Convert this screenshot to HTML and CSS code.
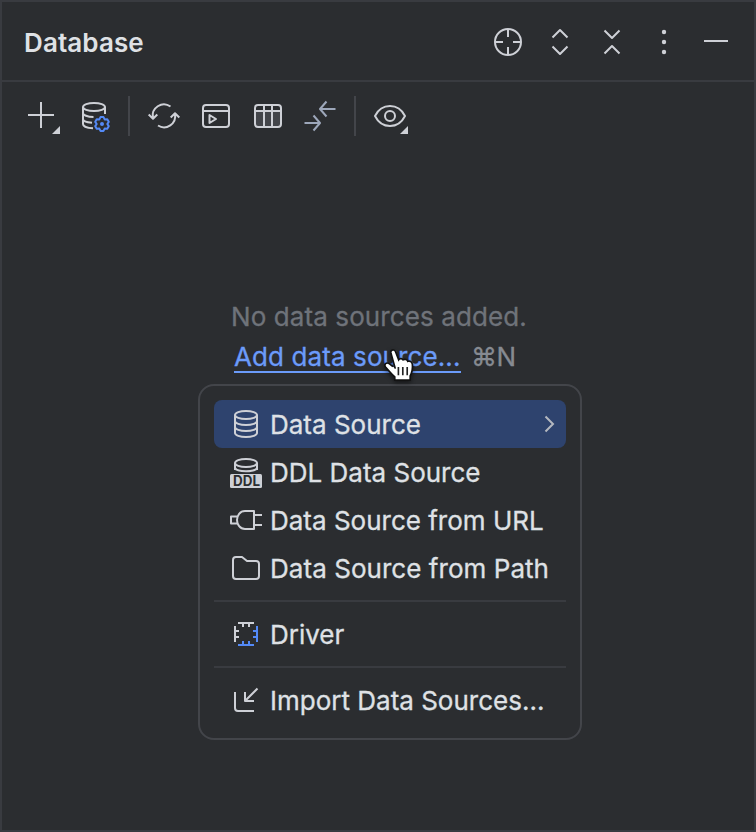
FILE: index.html
```html
<!DOCTYPE html>
<html lang="en">
<head>
<meta charset="utf-8">
<title>Database</title>
<link rel="stylesheet" href="styles.css">
</head>
<body>
<main class="panel">
  <header class="header">
    <h1 class="title">Database</h1>
    <div class="header-actions">
      <svg class="icon" viewBox="0 0 32 32"><circle cx="16" cy="16" r="13"/><path d="M16 3v8M16 21v8M3 16h8M21 16h8"/></svg>
      <svg class="icon" viewBox="0 0 32 32"><path d="M8.500 11.500L16 4l7.500 7.500M8.500 20.500L16 28l7.500-7.500"/></svg>
      <svg class="icon" viewBox="0 0 32 32"><path d="M8.500 4.500L16 12l7.500-7.500M8.500 27.500L16 20l7.500 7.500"/></svg>
      <svg class="icon" viewBox="0 0 32 32"><g class="solid"><circle cx="16" cy="6" r="2.200"/><circle cx="16" cy="16" r="2.200"/><circle cx="16" cy="26" r="2.200"/></g></svg>
      <svg class="icon" viewBox="0 0 32 32"><path d="M4 15h24"/></svg>
    </div>
  </header>

  <nav class="toolbar">
    <svg class="icon add" viewBox="0 0 32 32"><path d="M15 2v26M2 15h26"/><path class="solid" d="M34 26v8h-8z"/></svg>
    <svg class="icon" viewBox="0 0 32 32"><ellipse cx="14" cy="7" rx="11" ry="4"/><path d="M3 7v17c0 2.200 4 4 10 4.200M25 7v7M3 13c0 2 4.500 4 10.500 4M3 19c0 1.800 3.500 3.300 9 3.700"/><g class="accent" transform="translate(22 24)"><path d="M-1.500-6.900H1.500L2.650-4.600L5.260-4.760L6.760-2.160L5.300 0L6.760 2.160L5.260 4.760L2.650 4.600L1.500 6.900H-1.500L-2.650 4.600L-5.260 4.760L-6.760 2.160L-5.300 0L-6.760-2.160L-5.260-4.760L-2.650-4.600Z"/><circle class="gear-dot" r="2"/></g></svg>
    <span class="divider"></span>
    <svg class="icon" viewBox="0 0 32 32"><path d="M22.500 6.500A11.200 11.200 0 0 0 5 18M.700 14.500L5 18.800l4.300-4.300M10 25.500A11.200 11.200 0 0 0 27 14M22.700 17.500l4.300-4.300 4.300 4.300"/></svg>
    <svg class="icon" viewBox="0 0 32 32"><rect x="3" y="5" width="26" height="22" rx="3"/><path d="M3 11h26M9.500 15v8l6.500-4z"/></svg>
    <svg class="icon" viewBox="0 0 32 32"><rect class="tint" x="3" y="11" width="26" height="16"/><rect x="3" y="5" width="26" height="22" rx="3"/><path d="M3 11h26M12 5v22M20 5v22"/></svg>
    <svg class="icon muted" viewBox="0 0 32 32"><path d="M31.500 9H16.500M22.500 1.500L16 9l6.500 7.500M.500 23h15M9.500 15.500L16 23 9.500 30.500"/></svg>
    <span class="divider second"></span>
    <svg class="icon" viewBox="0 0 32 32"><path d="M1 16C4 10 9.500 6 16 6s12 4 15 10c-3 6-8.500 10-15 10S4 22 1 16z"/><circle cx="16" cy="16" r="5"/><path class="solid" d="M34 26v8h-8z"/></svg>
  </nav>

  <section class="empty">
    <p class="message">No data sources added.</p>
    <p class="action"><a class="link">Add data source...</a><span class="shortcut">⌘N</span>
      <svg class="cursor" viewBox="0 0 30 34" preserveAspectRatio="none"><path class="hand" d="M11.200 20L7.200 4.800C6.500 1.600 10.600.7 11.500 3.800L14.200 11.500C15 9.800 17.600 10 18.300 11.600C20 10.500 22 11.200 22.500 13C24.500 12.200 26.500 13.500 26.700 16C27.200 21 26 24.500 24.700 27V31H10.700V28C8 25.500 5 21.500 2.300 18.500C.6 16 2.800 13.500 5.600 15.200L9 18"/><path class="fingers" d="M14 18.500v8M18 18.500v8M22 18.500v8"/></svg>
    </p>
  </section>

  <div class="menu">
    <div class="item selected"><svg class="icon" viewBox="0 0 32 32"><ellipse cx="16" cy="7" rx="11" ry="4"/><path d="M5 7v18c0 2.200 5 4 11 4s11-1.800 11-4V7M5 13c0 2.200 5 4 11 4s11-1.800 11-4M5 19c0 2.200 5 4 11 4s11-1.800 11-4"/></svg><span>Data Source</span><svg class="chevron" viewBox="0 0 10 18"><path d="M1.500 1.500L9 9l-7.500 7.500"/></svg></div>
    <div class="item"><svg class="icon" viewBox="0 0 32 32"><path d="M5 14V7M27 7v7"/><ellipse cx="16" cy="7" rx="11" ry="4"/><path d="M5 12c2 4.300 20 4.300 22 0"/><rect class="solid" x="0" y="18" width="32" height="14" rx="1.500"/><text class="badge" x="3" y="30" textLength="27" lengthAdjust="spacingAndGlyphs">DDL</text></svg><span>DDL Data Source</span></div>
    <div class="item"><svg class="icon" viewBox="0 0 32 32"><path d="M24 7H15C10 7 7 11.500 7 16s3 9 8 9h9zM7 12.500H1v7h6M24 11h8M24 21h8"/></svg><span>Data Source from URL</span></div>
    <div class="item"><svg class="icon" viewBox="0 0 32 32"><path d="M3 8a3 3 0 0 1 3-3h6l5 4h9a3 3 0 0 1 3 3v12a3 3 0 0 1-3 3H6a3 3 0 0 1-3-3z"/></svg><span class="wide">Data Source from Path</span></div>
    <hr class="rule">
    <div class="item"><svg class="icon" viewBox="0 0 32 32"><path d="M8 5h16M13 5v4M19 5v4M5 8v16M5 13h4M5 19h4"/><path class="accent" d="M27 8v16M27 13h-4M27 19h-4M8 27h16M13 27v-4M19 27v-4"/></svg><span>Driver</span></div>
    <hr class="rule">
    <div class="item"><svg class="icon" viewBox="0 0 32 32"><path d="M5 8v16a3 3 0 0 0 3 3h16M27.500 4.500L15.500 16.500M15 8v9h9"/></svg><span>Import Data Sources...</span></div>
  </div>
</main>
</body>
</html>
```
FILE: styles.css
```css
* { box-sizing: border-box; }
body { margin: 0; background: #2b2d30; font-family: Inter, sans-serif; font-size: 26px; color: #dfe1e5; -webkit-text-stroke: 0.3px; }
p, h1 { margin: 0; }
.panel { height: 832px; border: 2px solid #393b40; overflow: hidden; display: flex; flex-direction: column; align-items: stretch; }
.header { height: 80px; flex: none; display: flex; align-items: center; justify-content: space-between; padding: 2px 22px 0; border-bottom: 2px solid #393b40; }
.title { font-size: 26px; font-weight: 600; line-height: 32px; margin-top: 2px; letter-spacing: 0.1px; -webkit-text-stroke: 0; }
.header-actions { display: flex; gap: 20px; }
.icon { width: 32px; height: 32px; flex: none; display: block; overflow: visible; fill: none; stroke: #ced0d6; stroke-width: 2; stroke-linecap: butt; stroke-linejoin: round; }
.solid { fill: #ced0d6; stroke: none; }
.accent { stroke: #548af7; }
.gear-dot { fill: #548af7; stroke: none; }
.tint { fill: #43454a; stroke: none; }
.muted { stroke: #9da7ba; }
.toolbar { height: 68px; flex: none; display: flex; align-items: center; gap: 20px; padding-left: 24px; }
.add { margin-right: 2px; }
.divider { width: 2px; height: 40px; background: #43454a; margin: 0 -2px 0 -4px; }
.second { margin: 0 -2px; }
.empty { margin-top: 147px; height: 84px; flex: none; }
.message { padding-left: 229px; line-height: 40px; color: #6f737a; letter-spacing: 0.1px; }
.action { position: relative; display: flex; align-items: flex-start; padding: 2px 0 0 232px; line-height: 36px; white-space: nowrap; }
.link { color: #6b9bfa; width: 227px; height: 34px; border-bottom: 2px solid #6b9bfa; letter-spacing: 0.1px; }
.shortcut { margin-left: 10px; color: #868a91; letter-spacing: -0.6px; }
.cursor { position: absolute; left: 381px; top: 11px; width: 33px; height: 35px; overflow: visible; filter: drop-shadow(0 2px 2px #0008); -webkit-text-stroke: 0; }
.hand { fill: #fff; stroke: #111; stroke-width: 1.5; }
.fingers { fill: none; stroke: #222; stroke-width: 1.5; }
.menu { width: 384px; height: 356px; flex: none; margin-left: 196px; margin-top: 3px; border: 2px solid #43454a; border-radius: 16px; padding: 14px; }
.item { height: 48px; display: flex; align-items: center; padding: 0 12px 0 16px; gap: 8px; border-radius: 8px; white-space: nowrap; }
.item span { line-height: 32px; padding-top: 2px; }
.wide { letter-spacing: 0.05px; }
.selected { background: #2e436e; }
.chevron { width: 10px; height: 18px; margin-left: auto; overflow: visible; fill: none; stroke: #b4b8bf; stroke-width: 2; }
.rule { border: 0; height: 2px; background: #393b40; margin: 8px 0; }
.badge { font: 700 14px Inter, sans-serif; fill: #2b2d30; stroke: none; -webkit-text-stroke: 0; }
```
